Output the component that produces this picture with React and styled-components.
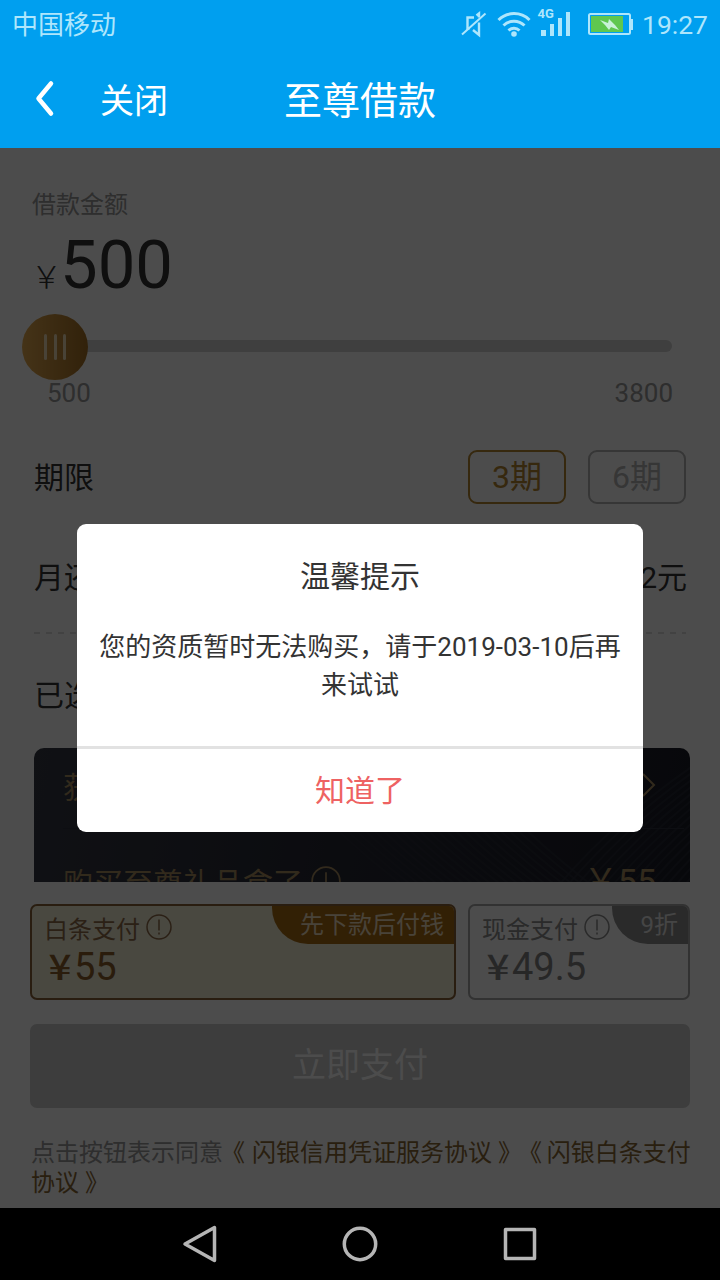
import styled, { createGlobalStyle } from 'styled-components';

const GlobalStyle = createGlobalStyle`
  * {
    box-sizing: border-box;
  }
  body {
    margin: 0;
    background: #000;
    font-family: Roboto, "Noto Sans CJK SC", sans-serif;
    font-weight: 400;
  }
`;

const Screen = styled.div`
  position: relative;
  width: 720px;
  height: 1280px;
  display: flex;
  flex-direction: column;
  overflow: hidden;
`;

const StatusBar = styled.div`
  height: 50px;
  padding: 0 12px;
  display: flex;
  align-items: center;
  justify-content: space-between;
  background: #009fef;
  color: #aee6fc;
  font-size: 26px;
  line-height: 48px;
`;

const StatusIcons = styled.div`
  display: flex;
  align-items: center;
  height: 48px;
  margin: -2px 0 0;
`;

const Clock = styled.span`
  margin-left: 10px;
  padding-top: 1px;
  font-size: 26.500px;
`;

const Header = styled.header`
  height: 98px;
  padding-left: 34px;
  display: grid;
  grid-template-columns: 66px 184px 1fr;
  align-items: center;
  background: #009fef;
  color: #fff;
`;

const CloseText = styled.span`
  padding-top: 4px;
  font-size: 34px;
  line-height: 50px;
`;

const Title = styled.h1`
  margin: 0;
  padding-top: 4px;
  font-size: 38px;
  font-weight: 400;
  line-height: 50px;
`;

const Stage = styled.div`
  position: relative;
  height: 1060px;
  display: flex;
  flex-direction: column;
  background: #fff;
`;

const Content = styled.main`
  height: 734px;
  padding: 39px 30px 0 32px;
  overflow: hidden;
`;

const Label = styled.div`
  height: 36px;
  font-size: 24px;
  line-height: 36px;
  color: #999;
`;

const Amount = styled.div`
  height: 87px;
  display: flex;
  align-items: baseline;
  font-size: 67px;
  line-height: 84px;
  color: #333;
`;

const Currency = styled.span`
  width: 29px;
  margin-left: -1px;
  font-family: "Noto Sans CJK SC", sans-serif;
  font-weight: 300;
  font-size: 31px;
`;

const Slider = styled.div`
  height: 70px;
  margin: 2px 16px 0 0;
  display: flex;
  align-items: center;
`;

const Knob = styled.div`
  width: 66px;
  height: 66px;
  flex: none;
  margin: 0 -2px 0 -10px;
  display: flex;
  align-items: center;
  justify-content: center;
  gap: 6.500px;
  border-radius: 50%;
  background: linear-gradient(90deg, #e6ab50, #a57025);
  z-index: 1;
`;

const Grip = styled.i`
  width: 3px;
  height: 26px;
  border-radius: 2px;
  background: #f5e0b8;
`;

const Track = styled.div`
  flex: 1;
  height: 12px;
  margin: -2px 2px 0 0;
  border-radius: 0 6px 6px 0;
  background: #d2d2d2;
`;

const Range = styled.div`
  margin: -4px 17px 0 15px;
  display: flex;
  justify-content: space-between;
  font-size: 26px;
  line-height: 30px;
  color: #999;
`;

const Row = styled.div`
  height: ${(p) => p.$height}px;
  margin-left: 2px;
  padding-top: ${(p) => p.$drop || 0}px;
  padding-right: ${(p) => p.$end || 0}px;
  display: flex;
  align-items: center;
  justify-content: space-between;
  font-size: 30px;
  line-height: 44px;
  color: #333;
`;

const Terms = styled.div`
  display: flex;
  gap: 22px;
  margin-bottom: 2px;
`;

const TermButton = styled.div`
  width: 98px;
  height: 54px;
  border: 2px solid ${(p) => (p.$on ? '#b5852f' : '#b4b4b4')};
  border-radius: 9px;
  font-size: 32px;
  line-height: 51px;
  text-align: center;
  color: ${(p) => (p.$on ? '#b5852f' : '#b4b4b4')};
`;

const Dashes = styled.div`
  height: 2px;
  margin: 25px 4px 0 2px;
  background: repeating-linear-gradient(90deg, #dcdcdc 0 6px, transparent 6px 12px);
`;

const GiftCard = styled.section`
  position: relative;
  height: 180px;
  margin-left: 2px;
  border-radius: 10px;
  overflow: hidden;
  background: linear-gradient(100deg, #363945 0%, #272935 45%, #191b26 100%);
  color: #a98d60;
  font-size: 30px;
`;

const Pattern = styled.svg`
  position: absolute;
  right: 0;
  top: 0;
`;

const GiftRow = styled.div`
  position: relative;
  height: ${(p) => p.$height}px;
  margin: 0 6px 0 29px;
  padding: 0 28px ${(p) => p.$lift}px 0;
  display: flex;
  align-items: center;
  justify-content: space-between;
  border-bottom: 1px solid ${(p) => (p.$line ? '#2e303c' : 'transparent')};
`;

const Inline = styled.span`
  display: flex;
  align-items: center;
  gap: 8px;
`;

const GiftPrice = styled.span`
  padding-bottom: 6px;
  font-size: 34px;
`;

const PayPanel = styled.footer`
  height: 326px;
  padding: 22px 30px 0;
  background: #fff;
`;

const PayOptions = styled.div`
  display: grid;
  grid-template-columns: 426px 222px;
  gap: 12px;
`;

const PayOption = styled.div`
  position: relative;
  height: 96px;
  padding: 3px 0 0 12px;
  border: 2px solid ${(p) => (p.$on ? '#8a6137' : '#a8a8a8')};
  border-radius: 7px;
  overflow: hidden;
  background: ${(p) => (p.$on ? '#f5f0d8' : '#fff')};
  color: ${(p) => (p.$on ? '#8f6c48' : '#8c8c8c')};
`;

const PayName = styled.div`
  height: 36px;
  display: flex;
  align-items: center;
  gap: 6px;
  font-size: 24px;
`;

const PayPrice = styled.div`
  margin: -2px 0 0 2px;
  display: flex;
  align-items: baseline;
  font-size: 38px;
  line-height: 43px;
  color: ${(p) => (p.$on ? '#8c5f2a' : '#848484')};
`;

const Yen = styled.span`
  width: 28px;
  text-align: center;
  font-family: "Noto Sans CJK SC", sans-serif;
  font-weight: 500;
  font-size: 35px;
  transform: scaleX(1.15);
`;

const Tag = styled.div`
  position: absolute;
  top: -2px;
  right: -2px;
  width: ${(p) => p.$width}px;
  height: 40px;
  padding-right: 12px;
  border-bottom-left-radius: 36px;
  background: ${(p) => (p.$on ? '#a86c12' : '#8c8c8c')};
  color: ${(p) => (p.$on ? '#f2dfc0' : '#e6e6e6')};
  font-size: 24px;
  line-height: 42px;
  text-align: right;
`;

const PayButton = styled.div`
  height: 84px;
  margin-top: 24px;
  border-radius: 7px;
  background: #cbcbcb;
  color: #fff;
  font-size: 34px;
  line-height: 83px;
  text-align: center;
`;

const Agreement = styled.p`
  margin: 30px -10px 0 1px;
  font-size: 24px;
  line-height: 30px;
  color: #999;
  white-space: nowrap;
  text-spacing-trim: space-all;
`;

const Gold = styled.span`
  color: #8b6834;
`;

const OpenMark = styled.span`
  margin: 0 ${(p) => p.$gap}px 0 ${(p) => p.$pull}px;
`;

const Mask = styled.div`
  position: absolute;
  inset: 0;
  z-index: 2;
  background: rgba(0, 0, 0, 0.7);
`;

const Dialog = styled.div`
  position: absolute;
  left: 77px;
  top: 376px;
  width: 566px;
  height: 308px;
  border-radius: 9px;
  background: #fff;
  color: #333;
  text-align: center;
`;

const DialogTitle = styled.div`
  padding-top: 31px;
  font-size: 30px;
  line-height: 44px;
`;

const DialogText = styled.div`
  height: 147px;
  padding-top: 29px;
  font-size: 26px;
  line-height: 38px;
`;

const DialogButton = styled.div`
  height: 86px;
  border-top: 3px solid #e2e2e2;
  color: #ee6262;
  font-size: 30px;
  line-height: 83px;
`;

const NavBar = styled.nav`
  height: 72px;
  padding: 0 180px;
  display: flex;
  align-items: center;
  justify-content: space-between;
  background: #000;
`;

function Notice({ size }) {
  return (
    <svg width={size} height={size} viewBox="0 0 26 26" fill="none" stroke="currentColor" strokeWidth="1.500">
      <circle cx="13" cy="13" r="12" />
      <path d="M13 5.500v11M13 18.500v2" />
    </svg>
  );
}

function PhoneStatus() {
  return (
    <StatusIcons>
      <svg width="172" height="40" viewBox="460 4 172 40" fill="none" stroke="#aee6fc" overflow="visible">
        <path d="M476.500 15.500 479 13.500v4M474 17.500h-6.500v11h2M473 30l6 5V22.500" strokeWidth="2.400" />
        <path d="M462 34.500 485.500 13.500" strokeWidth="2" />
        <path d="M498.500 20a22 22 0 0 1 31 0M503.500 25.500a15 15 0 0 1 21 0M508.500 30.500a8 8 0 0 1 11 0" strokeWidth="3" />
        <circle cx="514" cy="34" r="2.800" fill="#aee6fc" stroke="none" />
        <text x="537.500" y="18" fontSize="13" fontWeight="700" fill="#aee6fc" stroke="none">4G</text>
        <path d="M541 30h5v6h-5zM550 24h4v12h-4zM558 18h4v18h-4zM566 12h4v24h-4z" fill="#aee6fc" stroke="none" />
        <rect x="589" y="14" width="41" height="20" rx="1.500" strokeWidth="2" />
        <path d="M591 16h32v16h-32z" fill="#5fc74f" stroke="none" />
        <path d="M631 19h2v11h-2z" fill="#aee6fc" stroke="none" />
        <path d="m600 20 8 3 1-4 6 6 4 5-8-3-2 3-4-5z" fill="#c8f2d8" stroke="none" />
      </svg>
      <Clock>19:27</Clock>
    </StatusIcons>
  );
}

function CardPattern() {
  const lines = Array.from({ length: 22 }, (_, i) => i * 9);
  return (
    <Pattern width="400" height="180" fill="none" stroke="#2c2f3b" strokeWidth="2">
      {lines.map((d) => (
        <path key={d} d={`M${d - 40} -20Q${d + 20} 70 ${d + 130} 150`} opacity="0.6" />
      ))}
      {lines.map((d) => (
        <path key={`r${d}`} d={`M${d + 250} 160Q${d + 320} 70 ${d + 430} 0`} opacity="0.6" />
      ))}
    </Pattern>
  );
}

function LoanForm() {
  return (
    <Content>
      <Label>借款金额</Label>
      <Amount>
        <Currency>￥</Currency>500
      </Amount>
      <Slider>
        <Knob>
          <Grip />
          <Grip />
          <Grip />
        </Knob>
        <Track />
      </Slider>
      <Range>
        <span>500</span>
        <span>3800</span>
      </Range>
      <Row $height={139} $end={4}>
        <span>期限</span>
        <Terms>
          <TermButton $on>3期</TermButton>
          <TermButton>6期</TermButton>
        </Terms>
      </Row>
      <Row $height={60} $end={3} $drop={2}>
        <span>月还款</span>
        <span>192元</span>
      </Row>
      <Dashes />
      <Row $height={114} $drop={10}>
        <span>已选</span>
      </Row>
      <GiftCard>
        <CardPattern />
        <GiftRow $height={81} $lift={6} $line>
          <span>获得</span>
          <svg width="14" height="24" fill="none" stroke="currentColor" strokeWidth="2">
            <path d="m1 1 11 11L1 23" />
          </svg>
        </GiftRow>
        <GiftRow $height={108} $lift={3}>
          <Inline>
            购买至尊礼品盒了
            <Notice size={30} />
          </Inline>
          <GiftPrice>￥55</GiftPrice>
        </GiftRow>
      </GiftCard>
    </Content>
  );
}

function Payment() {
  return (
    <PayPanel>
      <PayOptions>
        <PayOption $on>
          <PayName>
            白条支付
            <Notice size={26} />
          </PayName>
          <PayPrice $on>
            <Yen>¥</Yen>55
          </PayPrice>
          <Tag $on $width={184}>先下款后付钱</Tag>
        </PayOption>
        <PayOption>
          <PayName>
            现金支付
            <Notice size={26} />
          </PayName>
          <PayPrice>
            <Yen>¥</Yen>49.5
          </PayPrice>
          <Tag $width={78}>9折</Tag>
        </PayOption>
      </PayOptions>
      <PayButton>立即支付</PayButton>
      <Agreement>
        点击按钮表示同意
        <Gold>
          <OpenMark $pull={-2} $gap={1}>《 </OpenMark>闪银信用凭证服务协议 》
          <OpenMark $pull={-4} $gap={-1}>《 </OpenMark>闪银白条支付<br />协议 》
        </Gold>
      </Agreement>
    </PayPanel>
  );
}

function App() {
  return (
    <Screen>
      <GlobalStyle />
      <StatusBar>
        <span>中国移动</span>
        <PhoneStatus />
      </StatusBar>
      <Header>
        <svg width="22" height="40" fill="none" stroke="#fff" strokeWidth="4.500" strokeLinecap="round" strokeLinejoin="round">
          <path d="M17 4.500 4.500 19.500 17 34.500" />
        </svg>
        <CloseText>关闭</CloseText>
        <Title>至尊借款</Title>
      </Header>
      <Stage>
        <LoanForm />
        <Payment />
        <Mask>
          <Dialog>
            <DialogTitle>温馨提示</DialogTitle>
            <DialogText>
              您的资质暂时无法购买，请于2019-03-10后再
              <br />
              来试试
            </DialogText>
            <DialogButton>知道了</DialogButton>
          </Dialog>
        </Mask>
      </Stage>
      <NavBar>
        <svg width="40" height="40" fill="none" stroke="#b5b5b5" strokeWidth="3.500" strokeLinejoin="round">
          <path d="M34.500 3.500v33L5 20z" />
        </svg>
        <svg width="40" height="40" fill="none" stroke="#b5b5b5" strokeWidth="3.500">
          <circle cx="20" cy="20" r="15.700" />
        </svg>
        <svg width="40" height="40" fill="none" stroke="#b5b5b5" strokeWidth="3.500" strokeLinejoin="round">
          <rect x="5.500" y="5.500" width="29" height="29" />
        </svg>
      </NavBar>
    </Screen>
  );
}

export default App;
